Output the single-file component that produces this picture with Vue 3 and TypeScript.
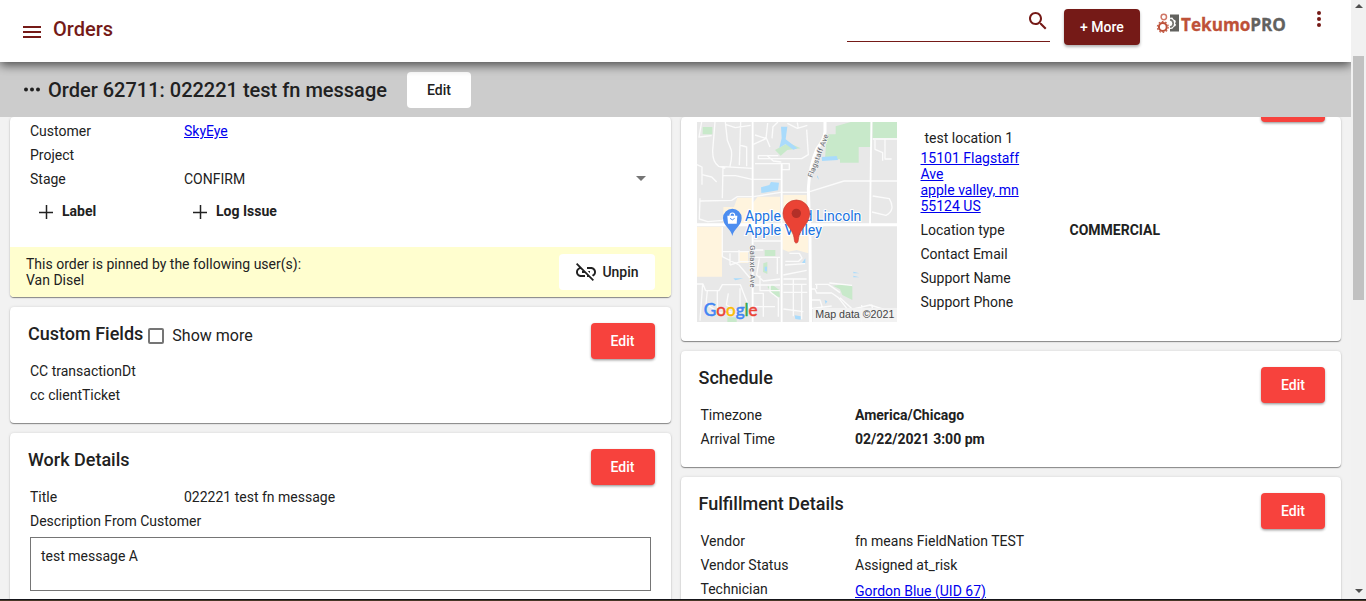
<script setup lang="ts">
interface Row {
  label: string
  value?: string
  link?: boolean
  bold?: boolean
}

const summary: Row[] = [
  { label: 'Customer', value: 'SkyEye', link: true },
  { label: 'Project' },
  { label: 'Stage', value: 'CONFIRM' },
]
const customFields: Row[] = [{ label: 'CC transactionDt' }, { label: 'cc clientTicket' }]
const locationRows: Row[] = [
  { label: 'Location type', value: 'COMMERCIAL', bold: true },
  { label: 'Contact Email' },
  { label: 'Support Name' },
  { label: 'Support Phone' },
]
const schedule: Row[] = [
  { label: 'Timezone', value: 'America/Chicago', bold: true },
  { label: 'Arrival Time', value: '02/22/2021 3:00 pm', bold: true },
]
const fulfillment: Row[] = [
  { label: 'Vendor', value: 'fn means FieldNation TEST' },
  { label: 'Vendor Status', value: 'Assigned at_risk' },
  { label: 'Technician', value: 'Gordon Blue (UID 67)', link: true },
]
</script>

<template>
  <div class="page">
    <div class="window">
      <div class="app">
        <header class="topbar">
          <svg class="burger" width="18" height="12" viewBox="0 0 18 12"><path d="M0 0h18v2H0zM0 5h18v2H0zM0 10h18v2H0z" /></svg>
          <h1>Orders</h1>
          <div class="search">
            <svg width="24" height="24" viewBox="0 0 24 24"><path d="M15.5 14h-.79l-.28-.27C15.41 12.59 16 11.11 16 9.5 16 5.91 13.09 3 9.5 3S3 5.91 3 9.5 5.91 16 9.5 16c1.61 0 3.09-.59 4.23-1.57l.27.28v.79l5 4.99L20.49 19l-4.99-5zm-6 0C7.01 14 5 11.99 5 9.5S7.01 5 9.5 5 14 7.01 14 9.5 11.99 14 9.5 14z" /></svg>
          </div>
          <button class="btn maroon">+ More</button>
          <svg class="logo" width="131" height="24" viewBox="0 0 131 24">
            <circle cx="7.8" cy="4" r="2.7" fill="none" stroke="#cf7767" stroke-width="1.5" />
            <circle cx="6.8" cy="14" r="3.9" fill="none" stroke="#bd5038" stroke-width="2" />
            <circle cx="6.8" cy="14" r="5.4" fill="none" stroke="#c4604b" stroke-width="1.3" stroke-dasharray="1.7 1.7" />
            <path d="M14 1.5h9v17h-9v-2.6l2.4-.2 1.6-2 1.6-.8.3-1.6-1-1.1 1-1.3-.6-1.7-1.6-.6-1.4-2.2-2.3.3z" fill="#62625f" />
            <path d="M14 6.6q3.2.6 3.2 3.8T14 14.2" fill="none" stroke="#777773" stroke-width="1.7" />
            <text y="18" x="25" textLength="105" lengthAdjust="spacingAndGlyphs"><tspan fill="#be5138" stroke="#be5138">Tekumo</tspan><tspan fill="#62625f" stroke="#62625f">PRO</tspan></text>
          </svg>
          <svg class="dots-v" width="6" height="18" viewBox="0 0 6 18"><circle cx="3" cy="3" r="2" /><circle cx="3" cy="9" r="2" /><circle cx="3" cy="15" r="2" /></svg>
        </header>

        <div class="subbar">
          <svg width="18" height="6" viewBox="0 0 18 6"><circle cx="3" cy="2.4" r="2" /><circle cx="9" cy="2.4" r="2" /><circle cx="15" cy="2.4" r="2" /></svg>
          <h2>Order 62711: 022221 test fn message</h2>
          <button class="btn white">Edit</button>
        </div>

        <main class="columns">
          <div class="column">
            <section class="card summary">
              <div class="rows">
                <div v-for="r in summary" :key="r.label" class="row">
                  <span>{{ r.label }}</span>
                  <a v-if="r.link" href="#">{{ r.value }}</a>
                  <span v-else>{{ r.value }}</span>
                  <i v-if="r.label === 'Stage'" class="caret"></i>
                </div>
              </div>
              <div class="actions">
                <span v-for="a in ['Label', 'Log Issue']" :key="a" class="action">
                  <svg width="14" height="14" viewBox="0 0 14 14"><path d="M7.5 0v14M0 7.5h14" stroke="#222" stroke-width="1.5" /></svg>
                  <b>{{ a }}</b>
                </span>
              </div>
              <div class="pinned">
                <p>This order is pinned by the following user(s):<br />Van Disel</p>
                <button class="btn white unpin">
                  <svg width="24" height="24" viewBox="0 0 24 24"><path d="M17 7h-4v1.9h4c1.71 0 3.1 1.39 3.1 3.1 0 1.43-.98 2.63-2.31 2.98l1.46 1.46C20.88 15.61 22 13.95 22 12c0-2.76-2.24-5-5-5zm-1 4h-2.19l2 2H16zM2 4.27l3.11 3.11C3.29 8.12 2 9.91 2 12c0 2.76 2.24 5 5 5h4v-1.9H7c-1.71 0-3.1-1.39-3.1-3.1 0-1.59 1.21-2.9 2.76-3.07L8.73 11H8v2h2.73L13 15.27V17h1.73l4.01 4L20 19.74 3.27 3 2 4.27z" /></svg>
                  Unpin
                </button>
              </div>
            </section>

            <section class="card">
              <div class="card-head">
                <h3>Custom Fields</h3>
                <i class="checkbox"></i>
                <span class="show-more">Show more</span>
                <button class="btn red">Edit</button>
              </div>
              <div class="rows">
                <div v-for="r in customFields" :key="r.label" class="row wide"><span>{{ r.label }}</span></div>
              </div>
            </section>

            <section class="card">
              <div class="card-head">
                <h3>Work Details</h3>
                <button class="btn red">Edit</button>
              </div>
              <div class="rows">
                <div class="row"><span>Title</span><span>022221 test fn message</span></div>
                <div class="row wide"><span>Description From Customer</span></div>
                <div class="description">test message A</div>
              </div>
            </section>
          </div>

          <div class="column">
            <section class="card location">
              <svg class="map" width="200" height="200" viewBox="21 21 600 600">
                <rect x="21" y="21" width="600" height="600" fill="#e8e8e8" />
                <g fill="#fff4de">
                  <path d="M21 335h75v150H21zM100 276h32l10-28h44v80h-86zM188 265l15-20h67v45l-35 8v25h-47zM280 240h70v83h-70zM277 330h78v85l-35-10-25 5-18-7zM147 408h27v36h-27z" />
                </g>
                <g fill="#c8e9ca">
                  <path d="M410 58h27V34l45-13h61v75h-37v47h-56v-10h-45zM548 21h73v48h-73zM38 36h29v22H38zM255 105l40-22 37 17-40 5-20 17zM224 405h32v18h-32zM220 445l12-4v36l-13-6zM429 512l31-4 27 6v41l-30-15-7-17zM232 515l16-5 20 15 2 22-18-5zM112 607h28v14h-28z" />
                </g>
                <g fill="#a9dbfc">
                  <path d="M273 35h19l-5 38 35 27-12 4-23-17-19 11 7-28zM395 126l45-3 4 12-48 3zM213 217l25-7 5-9 24 2-3 23-50 8zM346 430v14h-10zM490 470l18 5h-18zM490 482l18 5h-18zM130 490h30l-24 6zM224 455h7v14h-7zM314 601l18 3v10l-16-2zM404 555l8 4-5 8zM383 181l4 14-6-9z" />
                </g>
                <g fill="none" stroke="#fbfbfb" stroke-width="4" stroke-linejoin="round">
                  <path d="M75 21l-7 85q-1 35 18 48l20 5M106 21l6 55 12 30q3 20-4 48M35 21l-8 45 38-4M106 28l30 10 46-7M152 21l-4 130M148 90l22 6v58M86 154l102 6M21 149l15 7v23l29 7 15 15M99 155l-2 95M36 179v30M97 182h40l49 11M30 250l-2 62 25 8 45-4 20-20 15 24M30 258l95-2 17-11h45M190 88l38-17 5-47M195 60l35 11 10 25M205 121v10h130l20-12-5-75M246 70l3-35 15-14M292 25l30 15 30-9M322 22l3 20M205 122h60M195 146h80v18h23v-18h-23M190 193h85M230 121l20 17 24 3M190 245l82-13h80l110-34h159M548 72h73M555 75v28l23 10v24M585 72v60h20M548 243l50 8q20 35-10 50l-42-10" />
                  <path d="M97 335v90l50 25 38 45M120 415v35M97 410h80M147 405v40M120 450l32-10h35M190 357h84M190 378h84M190 405h30M195 427h75M208 430l-8 50 20 18 50-6M262 427v50M298 415h30l8 14-10 10h-40M285 450l60-4M280 480l70-14M280 492h70M190 510h80M210 482v45h60M21 507h18l8 20h40l10-18h54l35 90M38 507l-8 110M52 527l-4 40 40 26 55 5M82 527v50l45 15M115 535l-6 35 40 20M150 520v78M190 535h30v70M195 575h60M240 510v20l25 20v55M280 508h70M310 492v112M280 532h72M335 508v105M280 582l60 8M360 522h15l5 12h45l20 14 30 38M380 508v14M418 504l68 7M375 508h40l35 25M360 555h30l8 25M450 548l40 37 25 3v32M425 573l-65 8M490 582l50-12 81 25M515 570v51M545 568l10 53" />
                </g>
                <g fill="none" stroke="#fff">
                  <path d="M188 21v600M275 148v473M544 21l-4 308" stroke-width="5.5" />
                  <path d="M405 21v30q-2 22-24 50-22 50-26 120l5 150 2 250M21 329h600" stroke-width="9" />
                </g>
                <g class="map-label" font-size="22">
                  <text transform="translate(367 189) rotate(-69)" textLength="137">Flagstaff Ave</text>
                  <text transform="translate(179 391) rotate(90)" textLength="126">Galaxie Ave</text>
                </g>
                <path d="M127 363c-4-22-28-30-28-54a28 28 0 0 1 56 0c0 24-24 32-28 54z" fill="#4c8df0" />
                <path d="M112 302h30l-2 24h-26z" fill="#fff" />
                <path d="M120 304v-3a7 7 0 0 1 14 0v3" fill="none" stroke="#fff" stroke-width="3.5" />
                <path d="M120 310q7 9 14 0" fill="none" stroke="#4c8df0" stroke-width="3" />
                <g class="map-place" font-size="43">
                  <text x="165" y="318" textLength="349" lengthAdjust="spacingAndGlyphs">Apple Ford Lincoln</text>
                  <text x="165" y="361" textLength="231" lengthAdjust="spacingAndGlyphs">Apple Valley</text>
                </g>
                <path d="M319 384c-8 0-4-12-10-27-9-22-30-35-30-62a40 40 0 0 1 80 0c0 27-21 40-30 62-6 15-2 27-10 27z" fill="#ea4335" stroke="#c33b30" stroke-width="2" />
                <circle cx="319" cy="295" r="14" fill="#b32f28" />
                <text class="google" x="41" y="602" textLength="162" lengthAdjust="spacingAndGlyphs"><tspan fill="#4285f4" stroke="#4285f4">G</tspan><tspan fill="#ea4335" stroke="#ea4335">o</tspan><tspan fill="#fbbc05" stroke="#fbbc05">o</tspan><tspan fill="#4285f4" stroke="#4285f4">g</tspan><tspan fill="#34a853" stroke="#34a853">l</tspan><tspan fill="#ea4335" stroke="#ea4335">e</tspan></text>
                <rect x="369" y="579" width="252" height="42" fill="#f3f3f3" fill-opacity=".88" />
                <text class="credit" x="376" y="609" textLength="237" lengthAdjust="spacingAndGlyphs">Map data ©2021</text>
              </svg>
              <div class="place">
                <p class="place-name">test location 1</p>
                <a href="#" class="address">15101 Flagstaff Ave<br />apple valley, mn 55124 US</a>
                <div v-for="r in locationRows" :key="r.label" class="row">
                  <span>{{ r.label }}</span><b v-if="r.bold">{{ r.value }}</b>
                </div>
              </div>
              <i class="edit-edge"></i>
            </section>

            <section class="card">
              <div class="card-head">
                <h3>Schedule</h3>
                <button class="btn red">Edit</button>
              </div>
              <div class="rows details">
                <div v-for="r in schedule" :key="r.label" class="row"><span>{{ r.label }}</span><b>{{ r.value }}</b></div>
              </div>
            </section>

            <section class="card">
              <div class="card-head">
                <h3>Fulfillment Details</h3>
                <button class="btn red">Edit</button>
              </div>
              <div class="rows details">
                <div v-for="r in fulfillment" :key="r.label" class="row">
                  <span>{{ r.label }}</span>
                  <a v-if="r.link" class="low" href="#">{{ r.value }}</a>
                  <span v-else>{{ r.value }}</span>
                </div>
              </div>
            </section>
          </div>
        </main>
      </div>
      <aside class="scrollbar">
        <i class="arrow up"></i>
        <i class="thumb"></i>
        <i class="arrow down"></i>
      </aside>
    </div>
    <div class="bottom-edge"></div>
  </div>
</template>

<style>
body {
  margin: 0;
  overflow: hidden;
}
</style>

<style scoped>
.page {
  height: 601px;
  overflow: hidden;
  display: flex;
  flex-direction: column;
  background: #f2f2f2;
  color: #212121;
  font: 14px/16px Roboto, sans-serif;
}
.page * {
  box-sizing: border-box;
}
h1, h2, h3, p {
  margin: 0;
  font-weight: 500;
}
a {
  color: #0000ee;
}
.window {
  height: 599px;
  display: flex;
}
.bottom-edge {
  height: 2px;
  background: linear-gradient(#15151a 50%, #463727 50%);
}
.app {
  width: 1351px;
  display: flex;
  flex-direction: column;
  overflow: hidden;
}
.topbar {
  height: 62px;
  flex: none;
  display: flex;
  align-items: flex-start;
  background: #fff;
  box-shadow: 0 3px 10px rgba(0, 0, 0, 0.65);
  position: relative;
  z-index: 2;
  fill: #751a17;
}
.burger {
  margin: 26px 0 0 23px;
}
h1 {
  margin: 17px 0 0 12px;
  font-size: 20px;
  line-height: 24px;
  color: #751a17;
}
.search {
  width: 203px;
  height: 42px;
  margin-left: auto;
  padding: 9px 0 0 179px;
  border-bottom: 1px solid #751a17;
}
.btn {
  height: 36px;
  padding: 0;
  width: 64px;
  border: 0;
  border-radius: 4px;
  font: 500 14px/36px Roboto, sans-serif;
  color: #fff;
  text-align: center;
}
.btn.maroon {
  width: 76px;
  margin: 9px 0 0 14px;
  background: #751a17;
  box-shadow: 0 2px 3px rgba(0, 0, 0, 0.3);
}
.btn.white {
  background: #fff;
  color: #212121;
}
.btn.red {
  margin-left: auto;
  background: #f7423d;
  box-shadow: 0 2px 3px -1px rgba(0, 0, 0, 0.3), 0 1px 3px rgba(0, 0, 0, 0.2);
}
.logo {
  margin: 13px 0 0 16px;
  font: 700 18px "Open Sans", sans-serif;
  stroke-width: 0.3px;
}
.dots-v {
  margin: 10px 29px 0 29px;
}
.subbar {
  height: 55px;
  flex: none;
  display: flex;
  align-items: center;
  padding-left: 23px;
  background: #ccc;
  position: relative;
  z-index: 1;
  fill: #212121;
}
h2 {
  margin: 0 20px 0 7px;
  font-size: 20px;
  line-height: 24px;
}
.columns {
  display: grid;
  grid-template-columns: 1fr 1fr;
  gap: 10px;
  padding: 0 10px;
}
.column {
  display: flex;
  flex-direction: column;
  gap: 10px;
}
.card {
  min-height: 116px;
  padding: 16px;
  background: #fff;
  border-radius: 4px;
  box-shadow: 0 1px 1px rgba(0, 0, 0, 0.42), 0 0 3px rgba(0, 0, 0, 0.12);
}
.rows {
  padding: 0 4px;
}
.row {
  display: grid;
  grid-template-columns: 154px 1fr auto;
  align-items: center;
  height: 24px;
}
.details .row {
  grid-template-columns: 154.5px 1fr;
}
.row.wide {
  grid-template-columns: 1fr;
}
.low {
  position: relative;
  top: 2px;
}
.summary {
  height: 180px;
  padding: 2px 0 0;
  overflow: hidden;
}
.summary .rows {
  padding: 0 20px;
}
.caret {
  margin: -2px 5px 0 0;
  border: 5px solid transparent;
  border-top-color: #757575;
  border-bottom: 0;
}
.actions {
  height: 56px;
  padding: 0 29px;
  display: flex;
}
.action {
  width: 154px;
  height: 40px;
  display: flex;
  align-items: center;
  gap: 9px;
}
.action svg {
  margin-top: 1px;
}
.pinned {
  height: 50px;
  display: flex;
  align-items: center;
  justify-content: space-between;
  padding: 0 16px;
  background: #fffecf;
}
.pinned p {
  font-weight: 400;
}
.btn.unpin {
  width: 96px;
  display: flex;
  align-items: center;
  justify-content: center;
  gap: 4px;
}
.unpin svg {
  fill: #212121;
}
.card-head {
  height: 36px;
  display: flex;
  padding-left: 2px;
}
h3 {
  font-size: 18px;
  line-height: 22px;
}
.checkbox {
  width: 16px;
  height: 16px;
  margin: 5px 8px 0 5px;
  border: 2px solid #757575;
  border-radius: 2px;
}
.show-more {
  font-size: 16px;
  line-height: 26px;
}
.description {
  height: 54px;
  margin-top: 4px;
  padding: 10px;
  border: 1px solid #757575;
}
.location {
  height: 224px;
  padding: 5px 16px 0;
  display: flex;
  position: relative;
}
.map {
  margin-right: 24px;
}
.place {
  width: 404px;
  padding-top: 8px;
}
.place-name {
  padding-left: 4px;
  margin-bottom: 4px;
  font-weight: 400;
}
.address {
  display: block;
  width: 104px;
  margin-bottom: 4px;
}
.place .row {
  grid-template-columns: 149px 1fr;
}
.edit-edge {
  position: absolute;
  right: 16px;
  top: -31px;
  width: 64px;
  height: 36px;
  border-radius: 4px;
  background: #f7423d;
  box-shadow: 0 2px 3px -1px rgba(0, 0, 0, 0.3), 0 1px 3px rgba(0, 0, 0, 0.2);
}
.map-label {
  font-family: Roboto, sans-serif;
  fill: #5f666c;
  paint-order: stroke;
  stroke: #f3f3f3;
  stroke-width: 4px;
}
.map-place {
  font-family: Roboto, sans-serif;
  fill: #1a73e0;
  paint-order: stroke;
  stroke: #fff;
  stroke-width: 6px;
}
.google {
  font: 400 54px Lato, sans-serif;
  stroke-width: 1.6px;
}
.credit {
  font: 33px "Liberation Sans", sans-serif;
  fill: #444;
}
.scrollbar {
  width: 15px;
  display: flex;
  flex-direction: column;
  align-items: center;
  background: #f1f1f1;
}
.thumb {
  width: 11px;
  height: 244px;
  margin-top: 48px;
  background: #c1c1c1;
}
.arrow {
  border: 4px solid transparent;
}
.up {
  margin-top: 4px;
  border-top: 0;
  border-bottom-color: #505050;
}
.down {
  margin: auto 0 6px;
  border-bottom: 0;
  border-top-color: #505050;
}
</style>
